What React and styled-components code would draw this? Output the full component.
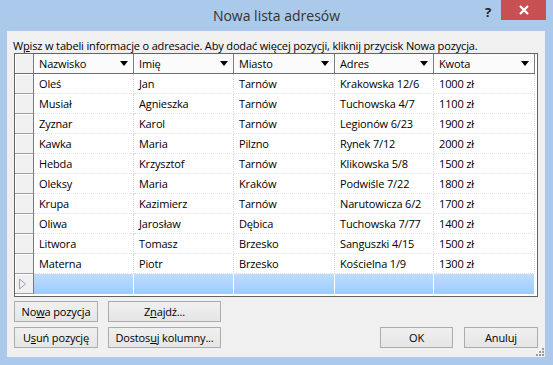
import React from "react";
import styled, { createGlobalStyle } from "styled-components";

const GlobalStyle = createGlobalStyle`
  html, body {
    margin: 0;
    padding: 0;
    background: #abc9ea;
  }
`;

const COLS = [
  { label: "Nazwisko", width: 100 },
  { label: "Imię", width: 100 },
  { label: "Miasto", width: 101 },
  { label: "Adres", width: 99 },
  { label: "Kwota", width: 101 },
];

const TEMPLATE = "19px " + COLS.map((c) => c.width + "px").join(" ");

const ROWS = [
  ["Oleś", "Jan", "Tarnów", "Krakowska 12/6", "1000 zł"],
  ["Musiał", "Agnieszka", "Tarnów", "Tuchowska 4/7", "1100 zł"],
  ["Zyznar", "Karol", "Tarnów", "Legionów 6/23", "1900 zł"],
  ["Kawka", "Maria", "Pilzno", "Rynek 7/12", "2000 zł"],
  ["Hebda", "Krzysztof", "Tarnów", "Klikowska 5/8", "1500 zł"],
  ["Oleksy", "Maria", "Kraków", "Podwiśle 7/22", "1800 zł"],
  ["Krupa", "Kazimierz", "Tarnów", "Narutowicza 6/2", "1700 zł"],
  ["Oliwa", "Jarosław", "Dębica", "Tuchowska 7/77", "1400 zł"],
  ["Litwora", "Tomasz", "Brzesko", "Sanguszki 4/15", "1500 zł"],
  ["Materna", "Piotr", "Brzesko", "Kościelna 1/9", "1300 zł"],
];

const App = () => {
  return (
    <>
      <GlobalStyle />
      <Window>
        <TitleBar>
          <span />
          <Title>Nowa lista adresów</Title>
          <Controls>
            <HelpButton>?</HelpButton>
            <CloseButton>
              <svg width="10" height="10" viewBox="0 0 10 10">
                <path d="M1 1 L9 9 M9 1 L1 9" stroke="#fff" strokeWidth="2.2" />
              </svg>
            </CloseButton>
          </Controls>
        </TitleBar>

        <Client>
          <Hint>
            W<u>p</u>isz w tabeli informacje o adresacie. Aby dodać więcej pozycji, kliknij przycisk Nowa pozycja.
          </Hint>

          <GridBox>
            <HeaderRow>
              <Corner />
              {COLS.map((c) => (
                <HeaderCell key={c.label}>
                  <span>{c.label}</span>
                  <DropArrow />
                </HeaderCell>
              ))}
            </HeaderRow>

            {ROWS.map((row, i) => (
              <Row key={i}>
                <RowHead />
                {row.map((v, j) => (
                  <Cell key={j}>{v}</Cell>
                ))}
              </Row>
            ))}

            <Row>
              <RowHead>
                <svg width="9" height="12" viewBox="0 0 9 12">
                  <path d="M1.5 1 L7.5 6 L1.5 11 Z" fill="none" stroke="#8aa6c8" strokeWidth="1" />
                </svg>
              </RowHead>
              {COLS.map((c) => (
                <NewCell key={c.label} />
              ))}
            </Row>
          </GridBox>

          <Bottom>
            <LeftButtons>
              <Button>No<u>w</u>a pozycja</Button>
              <Button>Z<u>n</u>ajdź...</Button>
              <Button>U<u>s</u>uń pozycję</Button>
              <Button>Dostos<u>u</u>j kolumny...</Button>
            </LeftButtons>
            <RightButtons>
              <Button $w={73}>OK</Button>
              <Button $w={74}>Anuluj</Button>
            </RightButtons>
          </Bottom>

          <Grip width="8" height="8" viewBox="0 0 8 8">
            <g fill="#9a9a9a">
              <rect x="6" y="0" width="2" height="2" />
              <rect x="3" y="3" width="2" height="2" />
              <rect x="6" y="3" width="2" height="2" />
              <rect x="0" y="6" width="2" height="2" />
              <rect x="3" y="6" width="2" height="2" />
              <rect x="6" y="6" width="2" height="2" />
            </g>
          </Grip>
        </Client>
      </Window>
    </>
  );
};

const Window = styled.div`
  width: 553px;
  height: 365px;
  background: #abc9ea;
  display: flex;
  flex-direction: column;
  font-family: "Open Sans", "Noto Sans", sans-serif;
  font-size: 11px;
  letter-spacing: -0.15px;
  color: #000;
`;

const TitleBar = styled.div`
  height: 31px;
  display: grid;
  grid-template-columns: 1fr auto 1fr;
  align-items: start;
`;

const Title = styled.div`
  font-size: 14px;
  letter-spacing: 0;
  color: #333;
  padding-top: 6px;
  line-height: 20px;
`;

const Controls = styled.div`
  justify-self: end;
  display: flex;
  align-items: flex-start;
  padding-right: 7px;
`;

const HelpButton = styled.div`
  width: 26px;
  height: 20px;
  font-size: 13px;
  font-weight: 700;
  color: #1e1e1e;
  display: flex;
  align-items: center;
  justify-content: center;
  padding-top: 4px;
  box-sizing: border-box;
`;

const CloseButton = styled.div`
  width: 45px;
  height: 20px;
  background: #c75050;
  display: flex;
  align-items: center;
  justify-content: center;
`;

const Client = styled.div`
  position: relative;
  flex: 1;
  margin: 0 8px 8px 7px;
  background: #f0f0f0;
  padding: 7px 7px 9px;
  display: flex;
  flex-direction: column;
`;

const Hint = styled.div`
  line-height: 15px;
  height: 15px;
  white-space: nowrap;
  margin-left: -1px;
`;

const GridBox = styled.div`
  box-sizing: border-box;
  width: 524px;
  height: 244px;
  border: 1px solid #646464;
  background: #fff;
  overflow: hidden;
`;

const HeaderRow = styled.div`
  display: grid;
  grid-template-columns: ${TEMPLATE};
  height: 20px;
`;

const Corner = styled.div`
  background: #f0f0f0;
  border-right: 1px solid #7a7a7a;
  border-bottom: 1px solid #6e6e6e;
  box-shadow: inset 1px 1px 0 #fff;
`;

const HeaderCell = styled.div`
  box-sizing: border-box;
  background: #fbfbfb;
  border-right: 1px solid #7d7d7d;
  border-bottom: 1px solid #6e6e6e;
  box-shadow: inset 1px 0 0 #fff;
  display: flex;
  align-items: center;
  justify-content: space-between;
  padding: 0 5px 0 5px;
  line-height: 18px;
`;

const DropArrow = styled.span`
  width: 0;
  height: 0;
  border-left: 4.5px solid transparent;
  border-right: 4.5px solid transparent;
  border-top: 5px solid #000;
`;

const Row = styled.div`
  display: grid;
  grid-template-columns: ${TEMPLATE};
  height: 20px;
`;

const RowHead = styled.div`
  box-sizing: border-box;
  background: #f0f0f0;
  border-right: 1px solid #7a7a7a;
  border-bottom: 1px solid #a0a0a0;
  box-shadow: inset 1px 1px 0 #fff;
  display: flex;
  align-items: center;
  padding-left: 3px;
`;

const Cell = styled.div`
  box-sizing: border-box;
  border-right: 1px dotted #d8d8d8;
  border-bottom: 1px dotted #e2e2e2;
  padding-left: 5px;
  line-height: 20px;
  white-space: nowrap;
  overflow: hidden;
`;

const NewCell = styled.div`
  box-sizing: border-box;
  border-right: 1px solid #fff;
  background: linear-gradient(to bottom, #bddcff, #9dcbff);
`;

const Bottom = styled.div`
  margin-top: 4px;
  display: flex;
  justify-content: space-between;
  align-items: flex-end;
`;

const LeftButtons = styled.div`
  display: grid;
  grid-template-columns: 84px 113px;
  column-gap: 10px;
  row-gap: 5px;
`;

const RightButtons = styled.div`
  display: flex;
  gap: 11px;
`;

const Button = styled.button`
  box-sizing: border-box;
  width: ${(p) => (p.$w ? p.$w + "px" : "auto")};
  height: 21px;
  padding: 0;
  border: 1px solid #acacac;
  background: linear-gradient(to bottom, #f0f0f0, #e5e5e5);
  font-family: inherit;
  font-size: 11px;
  letter-spacing: -0.15px;
  color: #000;
  line-height: 19px;
  text-align: center;
  white-space: nowrap;
`;

const Grip = styled.svg`
  position: absolute;
  right: 1px;
  bottom: 1px;
`;

export default App;
